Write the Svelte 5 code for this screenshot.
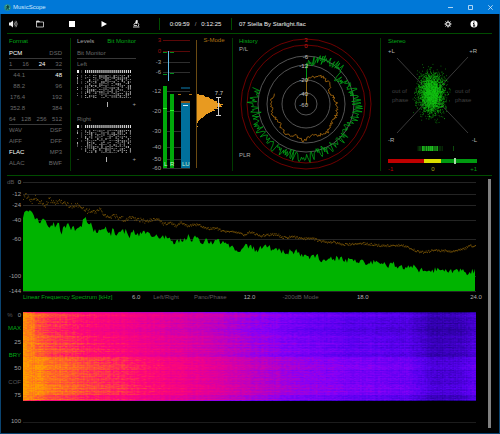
<script>
  import { onMount } from 'svelte';

  // small seeded generator so the traces look the same on every load
  function makeRandom(seed) {
    let s = seed;
    return () => {
      s = (s * 1664525 + 1013904223) % 4294967296;
      return s / 4294967296;
    };
  }

  function sample(points, x) {
    for (let i = 1; i < points.length; i++) {
      const [x0, y0] = points[i - 1];
      const [x1, y1] = points[i];
      if (x <= x1) return y0 + ((y1 - y0) * (x - x0)) / (x1 - x0);
    }
    return points[points.length - 1][1];
  }

  const round = (n) => Math.round(n * 10) / 10;

  // ---- format panel
  const rates = [
    ['44.1', '48'],
    ['88.2', '96'],
    ['176.4', '192'],
    ['352.8', '384'],
  ];
  const containers = [
    ['WAV', 'DSF'],
    ['AIFF', 'DFF'],
    ['FLAC', 'MP3'],
    ['ALAC', 'BWF'],
  ];
  const active = ['PCM', '24', '48', 'FLAC'];

  // ---- bit monitor
  function bitCells(seed) {
    const rnd = makeRandom(seed);
    const cells = [];
    for (let c = 0; c < 27; c++) {
      if (c === 1 || c === 3) continue;
      const weak = c === 2;
      const density = c === 0 ? 0.6 : 0.5 + rnd() * 0.45;
      cells.push({ x: c * 2, y: 0, h: 3, o: weak ? 0.25 : 1 });
      for (let r = 0; r < 12; r++) {
        if (rnd() < density) {
          cells.push({ x: c * 2, y: 5 + r * 2, h: rnd() > 0.5 ? 2 : 1, o: weak ? 0.25 : round(0.3 + rnd() * 0.5) });
        }
      }
    }
    return cells;
  }

  let balance = $state([
    { name: 'Left', value: 54, cells: bitCells(11) },
    { name: 'Right', value: 52, cells: bitCells(47) },
  ]);

  // ---- level meters
  const scale = [
    ['3', 40], ['0', 51], ['-3', 62], ['-6', 72], ['-12', 91],
    ['-20', 111], ['-30', 131], ['-40', 147], ['-50', 159], ['-60', 168],
  ];
  const histogram = [2, 7, 8, 12, 13, 16, 17, 20, 20, 23, 26, 24, 25, 20, 21, 17, 18, 15, 13, 11, 9, 8, 7, 6, 4, 3, 2, 1, 1, 0, 0, 0, 1];

  // ---- history
  const cx = 306;
  const cy = 104;
  const rings = [11, 24, 39, 48];
  const ringLabels = [['-6', 57], ['-12', 66], ['-20', 80], ['-40', 94], ['-60', 105]];

  function polar(points, jitter, step, seed) {
    const rnd = makeRandom(seed);
    const out = [];
    for (let a = 0; a <= 288; a += step) {
      const r = (sample(points, a) + (rnd() - 0.5) * 2 * jitter) / 3;
      const t = (a * Math.PI) / 180;
      out.push(`${round(cx + r * Math.sin(t))},${round(cy - r * Math.cos(t))}`);
    }
    return out.join(' ');
  }

  const peakTrace = polar(
    [[0, 114], [6, 125], [15, 140], [30, 142], [45, 150], [51, 122], [62, 140], [75, 146], [88, 152], [96, 155],
      [110, 152], [120, 140], [132, 150], [150, 150], [165, 150], [180, 165], [195, 158], [215, 160], [240, 158], [262, 152], [272, 162], [288, 156]],
    16, 1.1, 5
  );
  const loudTrace = polar(
    [[0, 72], [12, 80], [25, 94], [45, 94], [63, 80], [90, 92], [105, 97], [121, 94], [145, 106], [167, 96],
      [184, 109], [198, 98], [213, 107], [231, 99], [257, 106], [288, 100]],
    5, 2, 8
  );

  // ---- stereo
  const cloud = (() => {
    const rnd = makeRandom(23);
    const gauss = () => rnd() + rnd() + rnd() + rnd() - 2;
    let d = '';
    for (let i = 0; i < 2600; i++) {
      d += `M${round(431.5 + gauss() * 11)} ${round(94 + gauss() * 17)}h.7`;
    }
    return d;
  })();

  const stripes = (() => {
    const rnd = makeRandom(3);
    return Array.from({ length: 26 }, (_, i) => ({
      x: 417 + i,
      o: i > 4 && i < 21 ? round(0.45 + rnd() * 0.55) : round(rnd() * 0.4),
    }));
  })();

  // ---- spectrum, levels in thirds of a unit
  const specPoints = [
    [68, 150], [73, 118], [82, 120], [92, 108], [100, 125], [108, 150], [115, 140], [122, 158], [130, 136], [140, 155],
    [148, 168], [160, 150], [165, 170], [172, 150], [185, 180], [195, 168], [203, 154], [212, 180], [220, 155], [228, 178],
    [240, 168], [250, 148], [256, 140], [262, 155], [270, 152], [280, 172], [290, 178], [300, 170], [308, 182], [315, 168],
    [330, 192], [338, 175], [350, 190], [360, 180], [375, 178], [390, 192], [402, 180], [410, 192], [420, 185], [435, 186],
    [465, 192], [485, 198], [500, 192], [525, 216], [535, 206], [555, 202], [565, 196], [575, 210], [592, 192], [605, 210],
    [620, 206], [635, 216], [650, 202], [660, 214], [680, 214], [690, 225], [705, 230], [725, 235], [735, 216], [750, 226],
    [770, 235], [785, 228], [800, 224], [815, 232], [830, 227], [845, 241], [870, 241], [890, 240], [905, 254], [915, 244],
    [930, 258], [950, 251], [963, 270], [975, 260], [995, 263], [1020, 259], [1050, 268], [1085, 266], [1100, 277], [1120, 270],
    [1135, 279], [1150, 276], [1165, 284], [1180, 277], [1200, 290], [1220, 286], [1240, 286], [1260, 295], [1280, 292],
    [1300, 298], [1315, 288], [1330, 300], [1350, 296], [1370, 300], [1390, 293], [1400, 304], [1410, 298], [1427, 300],
  ];
  const peakPoints = [
    [68, 90], [74, 66], [80, 76], [95, 88], [105, 76], [115, 93], [125, 90], [135, 100], [148, 80], [155, 92],
    [180, 88], [210, 102], [235, 101], [260, 117], [285, 122], [300, 110], [310, 130], [350, 135], [370, 142], [400, 139],
    [440, 149], [470, 139], [490, 157], [510, 152], [530, 164], [540, 151], [560, 161], [590, 158], [620, 170], [650, 170],
    [680, 181], [700, 178], [730, 189], [750, 180], [780, 192], [830, 186], [845, 197], [880, 195], [900, 200], [940, 200],
    [960, 209], [1000, 211], [1030, 218], [1090, 215], [1150, 222], [1200, 220], [1220, 225], [1250, 238], [1270, 242],
    [1300, 235], [1360, 238], [1390, 231], [1410, 221], [1427, 224],
  ];

  const spectrum = (() => {
    const rnd = makeRandom(71);
    let d = 'M23 291';
    for (let x = 69; x <= 1425; x += 4) {
      const y = sample(specPoints, x) + (rnd() - 0.55) * 18;
      d += `L${round(x / 3)} ${round(172 + y / 3)}`;
    }
    return d + 'L475 291Z';
  })();

  const peaks = (() => {
    const rnd = makeRandom(19);
    let d = '';
    for (let x = 69; x <= 1425; x += 2) {
      const spread = x < 450 ? 14 : 7;
      const y = sample(peakPoints, x) + (rnd() - 0.5) * spread;
      d += `M${round(x / 3)} ${round(172 + y / 3)}h1`;
    }
    return d;
  })();

  const dbLabels = [['0', 182], ['-12', 194], ['-24', 205], ['-40', 220], ['-60', 239], ['-100', 276], ['-144', 291]];

  // ---- spectrogram
  const palette = [
    [0, 24, 0, 110], [0.15, 50, 0, 175], [0.3, 88, 0, 240], [0.42, 134, 0, 248], [0.54, 190, 0, 190],
    [0.67, 235, 0, 145], [0.77, 255, 10, 115], [0.88, 255, 85, 50], [1, 255, 160, 0],
  ];
  const energy = [
    [0, 1], [0.02, 0.95], [0.07, 0.88], [0.15, 0.81], [0.25, 0.74], [0.35, 0.66], [0.45, 0.57], [0.52, 0.49],
    [0.62, 0.41], [0.72, 0.35], [0.85, 0.31], [0.91, 0.19], [0.96, 0.21], [1, 0.28],
  ];
  const passage = [[0, -0.03], [0.15, -0.07], [0.35, -0.02], [0.48, -0.03], [0.55, 0.05], [0.68, 0.03], [0.75, 0.02], [0.85, 0.07], [0.93, 0.01], [1, 0]];

  let canvas;

  onMount(() => {
    const ctx = canvas.getContext('2d');
    const { width, height } = canvas;
    const img = ctx.createImageData(width, height);
    const rnd = makeRandom(97);
    const columns = Array.from({ length: width }, () => (rnd() - 0.5) * 0.035);
    for (let y = 0; y < height; y++) {
      const row = sample(passage, y / height) + (rnd() - 0.5) * 0.07;
      const edge = y === 0 || y === height - 1 ? 0.12 : 0;
      let grain = 0;
      for (let x = 0; x < width; x++) {
        if (x % 2 === 0) grain = (rnd() - 0.5) * 0.06;
        const v = Math.max(0, Math.min(1, sample(energy, x / width) + row * (x < 12 ? 0.3 : 1) + columns[x] + grain - edge));
        let k = 1;
        while (k < palette.length - 1 && v > palette[k][0]) k++;
        const a = palette[k - 1];
        const b = palette[k];
        const t = (v - a[0]) / (b[0] - a[0]);
        const i = (y * width + x) * 4;
        for (let c = 0; c < 3; c++) img.data[i + c] = a[c + 1] + (b[c + 1] - a[c + 1]) * t;
        img.data[i + 3] = 255;
      }
    }
    ctx.putImageData(img, 0, 0);
  });
</script>

<div class="window">
  <header class="titlebar">
    <svg class="logo" viewBox="0 0 16 16" aria-hidden="true">
      <circle cx="8" cy="8" r="7.5" fill="#2c8f86" />
      <path d="M8 3v5l-3 5M8 8l3 5M5 6l3 2M10 4v5" fill="none" stroke="#0c3b3a" stroke-width="2" />
      <path d="M4 4l2-1M12 11l1-2" stroke="#8fe0c8" stroke-width="1.5" />
    </svg>
    <h1>MusicScope</h1>
    <div class="win-buttons">
      <button aria-label="Minimize"><svg viewBox="0 0 5 5"><path d="M0 2.5h5" /></svg></button>
      <button aria-label="Maximize"><svg viewBox="0 0 5 5"><path d="M.5 .5h4v4h-4z" /></svg></button>
      <button aria-label="Close"><svg viewBox="0 0 5 5"><path d="M.3 .3l4.4 4.4M4.7 .3l-4.4 4.4" /></svg></button>
    </div>
  </header>

  <div class="content">
    <nav class="toolbar">
      <button class="first" aria-label="Volume">
        <svg viewBox="0 0 16 16">
          <path d="M0 5h3l5-4v14l-5-4H0z" fill="#eee" />
          <path d="M10 5q2 3 0 6M12 3q4 5 0 10M14 1.500q5 6.500 0 13" fill="none" stroke="#ccc" stroke-width="1.300" />
        </svg>
      </button>
      <button aria-label="Open">
        <svg viewBox="0 0 16 16">
          <path d="M1 14V2h5l2 2h7v10z" fill="none" stroke="#ddd" stroke-width="1.600" />
          <path d="M1 2h5l2 3H1z" fill="#ddd" />
        </svg>
      </button>
      <button aria-label="Stop"><svg viewBox="0 0 16 16"><path d="M2 2h12v12H2z" fill="#fff" /></svg></button>
      <button aria-label="Play"><svg viewBox="0 0 16 16"><path d="M3 2l11 6-11 6z" fill="#fff" /></svg></button>
      <button aria-label="Analyze">
        <svg viewBox="0 0 16 16">
          <path d="M8 0l4 1-2 7-4-1z" fill="#eee" />
          <path d="M11 5q5 5 1 8M6 6q-3 3-2 5h6M2 14h13" fill="none" stroke="#ddd" stroke-width="1.800" />
        </svg>
      </button>
      <div class="time"><span>0:09:59</span><span class="slash">/</span><span>0:12:25</span></div>
      <span class="file">07 Stella By Starlight.flac</span>
      <div class="right">
        <button aria-label="Settings">
          <svg viewBox="0 0 16 16">
            <circle cx="8" cy="8" r="4" fill="none" stroke="#ddd" stroke-width="2.500" />
            <path d="M8 1v3M8 12v3M1 8h3M12 8h3M3 3l2 2M11 11l2 2M3 13l2-2M11 5l2-2" stroke="#ddd" stroke-width="2" />
            <circle cx="8" cy="8" r="1.200" fill="#bbb" />
          </svg>
        </button>
        <button aria-label="Info">
          <svg viewBox="0 0 16 16">
            <circle cx="8" cy="8" r="7" fill="#fff" />
            <path d="M8 3v2.200M6 7h2v5M6 12h4.500" fill="none" stroke="#000" stroke-width="2" />
          </svg>
        </button>
      </div>
    </nav>

    <main>
      <div class="panels">
        <section class="format divided">
          <h2>Format</h2>
          <div class="row ruled">
            {#each ['PCM', 'DSD'] as f}<span class:on={active.includes(f)}>{f}</span>{/each}
          </div>
          <div class="row ruled">
            {#each ['1', '16', '24', '32'] as f}<span class:on={active.includes(f)}>{f}</span>{/each}
          </div>
          {#each rates as pair}
            <div class="row rate">
              {#each pair as f}<span class:on={active.includes(f)}>{f}</span>{/each}
            </div>
          {/each}
          <div class="row ruled">
            {#each ['64', '128', '256', '512'] as f}<span>{f}</span>{/each}
          </div>
          {#each containers as pair}
            <div class="row">
              {#each pair as f}<span class:on={active.includes(f)}>{f}</span>{/each}
            </div>
          {/each}
        </section>

        <section class="levels">
          <div class="tabs">
            <button>Levels</button>
            <button class="selected">Bit Monitor</button>
          </div>
          <div class="row ruled"><span>Bit Monitor</span></div>
          {#each balance as ch}
            <div class="channel">
              <div class="row"><label for="shift-{ch.name}">{ch.name}</label></div>
              <svg class="bits" viewBox="0 0 58 28" preserveAspectRatio="none" aria-hidden="true">
                {#each ch.cells as cell}
                  <rect x={cell.x} y={cell.y} width="1" height={cell.h} opacity={cell.o} />
                {/each}
                <rect x="0" y="0" width="2" height="3" />
              </svg>
              <div class="shift">
                <span>-</span>
                <input id="shift-{ch.name}" type="range" min="0" max="100" bind:value={ch.value} />
                <span>+</span>
              </div>
            </div>
          {/each}
        </section>

        <section class="divided">
          <svg class="plot" viewBox="145 38 87 133">
            {#each scale as [label, y], i}
              <text x="161" y={y + 2} text-anchor="end" fill={i < 2 ? '#a01010' : '#a8a8a8'}>{label}</text>
              <path d="M163 {y + 0.5}h27" stroke={i < 2 ? '#5a0808' : '#2e2e2e'} />
            {/each}
            <path d="M163 52.500h4M170 52.500h4M163 74.500h4M170 73.500h4" stroke="#008c1c" />
            <path d="M168.500 51v30" stroke="#62bde8" />
            <rect x="163" y="86" width="4" height="82" fill="#00a80a" />
            <rect x="170" y="94" width="4" height="74" fill="#00a80a" />
            <path d="M163 108.500h4M170 110.500h4" stroke="#2cf52c" />
            <rect x="181" y="87" width="9" height="2" fill="#06405a" />
            <rect x="181" y="101" width="9" height="2" fill="#8a5412" />
            <rect x="181" y="103" width="9" height="65" fill="#00709c" />
            <path d="M183 105.500h5" stroke="#d6f0fa" />
            <path d="M178 94.500h3M189 94.500h3" stroke="#b06c0c" />
            <g class="tag">
              <text x="164" y="166">L</text>
              <text x="170" y="166">R</text>
              <text x="182" y="166">LU</text>
            </g>
            <path d="M196.500 40v128" stroke="#6a4a12" />
            <text x="214" y="42" text-anchor="middle" fill="#b07414">S-Mode</text>
            {#each histogram as w, i}
              <rect x="197" y={94 + i} width={w} height="1" fill="#e89a20" />
            {/each}
            <path d="M218.500 97v18M216 97.500h5M216 115.500h5" stroke="#d0d0d0" />
            <text x="219" y="95" text-anchor="middle" fill="#c8c8c8">7.7</text>
          </svg>
        </section>

        <section class="divided">
          <svg class="plot" viewBox="233 38 147 133">
            {#each rings as r}
              <circle {cx} {cy} {r} stroke="#6a6a6a" />
            {/each}
            <circle {cx} {cy} r="59" stroke="#8c0000" />
            <circle {cx} {cy} r="65" stroke="#8c0000" />
            <polyline points={peakTrace} stroke="#00a816" />
            <polyline points={loudTrace} stroke="#b8740f" />
            <path d="M306.500 66v20" stroke="#009a14" />
            <path d="M306.500 80v25" stroke="#8a640c" />
            <text x="306" y="42" text-anchor="middle" fill="#c81818">3</text>
            <text x="306" y="48" text-anchor="middle" fill="#c81818">0</text>
            {#each ringLabels as [label, y]}
              <text x="308" y={y + 2} text-anchor="end" fill="#c4c4c4">{label}</text>
            {/each}
            <text x="239" y="43" fill="#00a816">History</text>
            <text x="239" y="51" fill="#a8a8a8">P/L</text>
            <text x="239" y="157" fill="#a8a8a8">PLR</text>
          </svg>
        </section>

        <section>
          <svg class="plot" viewBox="381 38 118 133">
            <path d="M397 58L468 133M468 57L397 133" stroke="#3a3a3a" />
            <path d={cloud} stroke="#14c414" opacity="0.65" />
            <text x="388" y="43" fill="#00a816">Stereo</text>
            <g fill="#b4b4b4">
              <text x="388" y="53">+L</text>
              <text x="477" y="53" text-anchor="end">+R</text>
              <text x="388" y="142">-R</text>
              <text x="477" y="142" text-anchor="end">-L</text>
            </g>
            <g fill="#404040">
              <text x="392" y="93">out of</text>
              <text x="392" y="102">phase</text>
              <text x="455" y="93">out of</text>
              <text x="455" y="102">phase</text>
            </g>
            {#each stripes as s}
              <rect x={s.x} y="146" width="1" height="5" fill="#1fc41f" opacity={s.o} />
            {/each}
            <rect x="453" y="146" width="1" height="5" fill="#0c4a0c" />
            <rect x="388" y="159" width="36" height="4" fill="#c00000" />
            <rect x="424" y="159" width="17" height="4" fill="#dcdc00" />
            <rect x="441" y="159" width="36" height="4" fill="#009a10" />
            <rect x="454" y="158" width="2" height="6" fill="#a8dca8" />
            <text x="388" y="171" fill="#c00000">-1</text>
            <text x="433" y="171" text-anchor="middle" fill="#b0a818">0</text>
            <text x="477" y="171" text-anchor="end" fill="#009a10">+1</text>
          </svg>
        </section>
      </div>

      <div class="lower">
        <div class="views">
          <svg class="plot" viewBox="1 178 475 114">
            {#each dbLabels as [label, y]}
              <text x="21" y={y + 2} text-anchor="end" fill="#a0a0a0">{label}</text>
              <path d="M23 {y + 0.5}h453" stroke="#242424" />
            {/each}
            <text x="7" y="184" fill="#585858">dB</text>
            <path d={spectrum} fill="#00b400" />
            <path d={peaks} stroke="#8a6008" opacity="0.75" />
          </svg>
          <div class="axis">
            <div class="span"><button class="green">Linear Frequency Spectrum [kHz]</button><span class="tick">6.0</span></div>
            <div class="span two"><button>Left/Right</button><button>Pano/Phase</button><span class="tick">12.0</span></div>
            <div class="span three"><button>-200dB Mode</button><span class="tick">18.0</span></div>
            <div class="span"><span class="tick">24.0</span></div>
          </div>

          <div class="spectrogram">
            <div class="percent">
              <div class="labels">
                <span><i>%</i>0</span>
                <button class="green">MAX</button>
                <span>25</span>
                <button class="green">BRY</button>
                <span>50</span>
                <button>COF</button>
                <span>75</span>
              </div>
              <span>100</span>
            </div>
            <div class="history">
              <canvas bind:this={canvas} width="452" height="89"></canvas>
            </div>
          </div>
        </div>
        <div class="scrollbar"></div>
      </div>
    </main>
  </div>
</div>

<style>
  :global(body) {
    margin: 0;
    background: #000;
  }

  .window {
    display: flex;
    flex-direction: column;
    box-sizing: border-box;
    min-height: 100vh;
    background: #000;
    color: #a0a0a0;
    font: 6px/8px "Liberation Sans", Arial, sans-serif;
  }

  button {
    margin: 0;
    padding: 0;
    border: 0;
    background: none;
    color: inherit;
    font: inherit;
    white-space: nowrap;
    cursor: pointer;
  }

  .titlebar {
    display: flex;
    align-items: center;
    height: 14px;
    padding-left: 4px;
    background: #0078d7;
    color: #cfe8fc;
  }

  .logo {
    width: 7px;
    height: 7px;
    margin-right: 2px;
  }

  h1,
  h2 {
    margin: 0;
    font-size: 6px;
    font-weight: 400;
  }

  .win-buttons {
    display: flex;
    margin-left: auto;
  }

  .win-buttons button {
    display: flex;
    align-items: center;
    justify-content: center;
    width: 20px;
    height: 14px;
  }

  .win-buttons svg {
    width: 5px;
    height: 5px;
    fill: none;
    stroke: #d8ecfb;
    stroke-width: 0.8;
    overflow: visible;
  }

  .content {
    flex: 1;
    border: 1px solid #0b4470;
    border-top: 0;
  }

  .toolbar {
    display: flex;
    align-items: center;
    height: 19px;
    margin: 0 7px 0 6px;
    border-bottom: 1px solid #004c00;
    color: #f0f0f0;
  }

  .toolbar button {
    display: flex;
    align-items: center;
    justify-content: center;
    width: 32px;
    height: 18px;
  }

  .toolbar button.first {
    width: 12px;
    margin-right: 5px;
  }

  .toolbar svg {
    width: 8px;
    height: 8px;
    overflow: visible;
  }

  .time {
    display: flex;
    justify-content: center;
    gap: 5px;
    width: 71px;
    margin-left: 7px;
    padding: 2px 0;
    border: solid #004c00;
    border-width: 0 1px;
  }

  .slash {
    color: #909090;
  }

  .file {
    padding-left: 7px;
  }

  .right {
    display: flex;
    margin-left: auto;
    padding-right: 5px;
  }

  .toolbar .right button {
    width: 26px;
  }

  .panels {
    display: grid;
    grid-template-columns: minmax(0, 70fr) minmax(0, 74fr) minmax(0, 88fr) minmax(0, 148fr) minmax(0, 118fr);
    padding: 4px 0;
  }

  .divided {
    border-right: 1px solid #003c00;
  }

  .format {
    padding: 0 8px;
  }

  h2 {
    height: 10px;
    color: #00a816;
    line-height: 7px;
  }

  .row {
    display: flex;
    justify-content: space-between;
    box-sizing: border-box;
    height: 11px;
    color: #6a6a6a;
    line-height: 11px;
  }

  .row.ruled {
    border-bottom: 1px solid #383838;
  }

  .row .on {
    color: #fff;
  }

  .rate span:first-child {
    width: 16px;
    text-align: right;
  }

  .levels {
    padding: 0 9px 0 6px;
  }

  .tabs {
    display: flex;
    justify-content: space-between;
    height: 10px;
    line-height: 7px;
  }

  .tabs button {
    height: 7px;
  }

  .selected,
  .green {
    color: #00a816;
  }

  .channel {
    margin-bottom: 4px;
  }

  .bits {
    display: block;
    width: 100%;
    height: 28px;
    fill: #f4f4f4;
  }

  .shift {
    display: flex;
    align-items: center;
    height: 12px;
  }

  .shift input {
    flex: 1;
    width: 0;
    min-width: 0;
    height: 8px;
    margin: 0;
    appearance: none;
    background: none;
  }

  .shift input::-webkit-slider-thumb {
    appearance: none;
    width: 1px;
    height: 5px;
    background: #b4b4b4;
  }

  .plot {
    display: block;
    width: 100%;
    fill: none;
    stroke-width: 1;
    overflow: visible;
  }

  .plot circle,
  .plot polyline {
    fill: none;
    stroke-width: 0.8;
  }

  .plot text {
    font-size: 6px;
  }

  .tag {
    fill: #c8f0cc;
  }

  .lower {
    display: grid;
    grid-template-columns: minmax(0, 1fr) 3px;
    gap: 12px;
    padding: 3px 8px 3px 0;
    position: relative;
  }

  .lower::before {
    content: "";
    position: absolute;
    top: 0;
    left: 6px;
    right: 7px;
    height: 1px;
    background: #004c00;
  }

  .views {
    padding-bottom: 3px;
  }

  .scrollbar {
    margin-top: 1px;
    background: #808080;
  }

  .axis {
    display: grid;
    grid-template-columns: repeat(4, minmax(0, 1fr));
    height: 10px;
    margin-left: 22px;
  }

  .span {
    display: flex;
    align-items: center;
    min-width: 0;
    color: #5c5c5c;
  }

  .span button + button {
    margin-left: 15px;
  }

  .two {
    padding-left: 17px;
  }

  .three {
    padding-left: 33px;
  }

  .tick {
    width: 16px;
    margin: 0 -8px 0 auto;
    color: #b0b0b0;
    text-align: center;
  }

  .spectrogram {
    display: flex;
    margin-top: 9px;
  }

  .percent {
    display: flex;
    flex-direction: column;
    gap: 18px;
    box-sizing: border-box;
    width: 22px;
    padding-right: 2px;
    text-align: right;
  }

  .labels {
    display: flex;
    flex-direction: column;
    justify-content: space-between;
    height: 88px;
  }

  .labels button {
    text-align: right;
  }

  .labels button:not(.green),
  .labels i {
    color: #585858;
    font-style: normal;
  }

  .labels i {
    margin-right: 5px;
  }

  .history {
    flex: 1;
    margin-top: 1px;
    padding-bottom: 21px;
    align-self: flex-start;
    border-bottom: 1px solid #1c1c1c;
  }

  canvas {
    display: block;
    width: 100%;
  }
</style>
